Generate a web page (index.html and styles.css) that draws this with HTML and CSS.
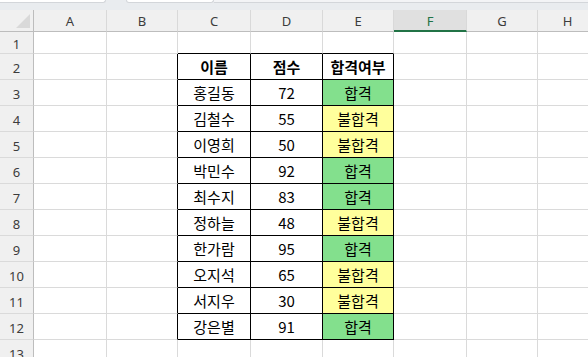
FILE: index.html
```html
<!DOCTYPE html>
<html lang="ko">
<head>
<meta charset="utf-8">
<link rel="stylesheet" href="styles.css">
</head>
<body>
<div class="topbar">
  <div class="tab tab1"></div>
  <div class="tab tab2"></div>
  <div class="tabfill"></div>
</div>
<div class="sheet">
  <div class="corner"><span class="tri"></span></div>
  <div class="ch">A</div><div class="ch">B</div><div class="ch">C</div><div class="ch">D</div><div class="ch">E</div><div class="ch sel">F</div><div class="ch">G</div><div class="ch">H</div>

  <div class="rh">1</div><div class="c"></div><div class="c"></div><div class="c tt"></div><div class="c tt"></div><div class="c tt"></div><div class="c"></div><div class="c"></div><div class="c"></div>

  <div class="rh">2</div><div class="c"></div><div class="c tl"></div><div class="c t b">이름</div><div class="c t b">점수</div><div class="c t b">합격여부</div><div class="c"></div><div class="c"></div><div class="c"></div>

  <div class="rh">3</div><div class="c"></div><div class="c tl"></div><div class="c t">홍길동</div><div class="c t">72</div><div class="c t pass">합격</div><div class="c"></div><div class="c"></div><div class="c"></div>

  <div class="rh">4</div><div class="c"></div><div class="c tl"></div><div class="c t">김철수</div><div class="c t">55</div><div class="c t fail">불합격</div><div class="c"></div><div class="c"></div><div class="c"></div>

  <div class="rh">5</div><div class="c"></div><div class="c tl"></div><div class="c t">이영희</div><div class="c t">50</div><div class="c t fail">불합격</div><div class="c"></div><div class="c"></div><div class="c"></div>

  <div class="rh">6</div><div class="c"></div><div class="c tl"></div><div class="c t">박민수</div><div class="c t">92</div><div class="c t pass">합격</div><div class="c"></div><div class="c"></div><div class="c"></div>

  <div class="rh">7</div><div class="c"></div><div class="c tl"></div><div class="c t">최수지</div><div class="c t">83</div><div class="c t pass">합격</div><div class="c"></div><div class="c"></div><div class="c"></div>

  <div class="rh">8</div><div class="c"></div><div class="c tl"></div><div class="c t">정하늘</div><div class="c t">48</div><div class="c t fail">불합격</div><div class="c"></div><div class="c"></div><div class="c"></div>

  <div class="rh">9</div><div class="c"></div><div class="c tl"></div><div class="c t">한가람</div><div class="c t">95</div><div class="c t pass">합격</div><div class="c"></div><div class="c"></div><div class="c"></div>

  <div class="rh">10</div><div class="c"></div><div class="c tl"></div><div class="c t">오지석</div><div class="c t">65</div><div class="c t fail">불합격</div><div class="c"></div><div class="c"></div><div class="c"></div>

  <div class="rh">11</div><div class="c"></div><div class="c tl"></div><div class="c t">서지우</div><div class="c t">30</div><div class="c t fail">불합격</div><div class="c"></div><div class="c"></div><div class="c"></div>

  <div class="rh">12</div><div class="c"></div><div class="c tl"></div><div class="c t">강은별</div><div class="c t">91</div><div class="c t pass">합격</div><div class="c"></div><div class="c"></div><div class="c"></div>

  <div class="rh">13</div><div class="c"></div><div class="c"></div><div class="c"></div><div class="c"></div><div class="c"></div><div class="c"></div><div class="c"></div><div class="c"></div>
</div>
</body>
</html>
```

FILE: styles.css
```css
html, body {
  margin: 0;
  padding: 0;
  background: #ffffff;
  overflow: hidden;
}

body {
  width: 588px;
  height: 357px;
  font-family: "Noto Sans CJK KR", "Noto Sans", sans-serif;
}

.topbar {
  height: 10px;
  background: #e9ecef;
  display: flex;
  align-items: flex-start;
}

.tabfill {
  flex: 1;
  height: 3px;
  background: #f3f4f6;
  border-bottom: 1px solid #d3d6da;
  box-sizing: border-box;
}

.tab {
  height: 3px;
  background: #ffffff;
  border: 1px solid #d3d6da;
  border-top: none;
  border-radius: 0 0 6px 6px;
  box-sizing: border-box;
}

.tab1 {
  width: 110px;
  margin-left: -4px;
}

.tab2 {
  width: 88px;
  margin-left: 20px;
}

.sheet {
  display: grid;
  grid-template-columns: 34px 73px 71px 73px 72px 71px 73px 71px 60px;
  grid-template-rows: 22px 22px repeat(12, 26px) 20px;
  overflow: hidden;
}

.corner,
.ch,
.rh {
  background: #f0f0f0;
  color: #3c3c3c;
  font-family: "Noto Sans", "Open Sans", sans-serif;
  font-size: 13px;
  box-sizing: border-box;
  display: flex;
  align-items: center;
  justify-content: center;
}

.corner {
  border-right: 1px solid #bdbdbd;
  border-bottom: 1px solid #bdbdbd;
  position: relative;
}

.tri {
  position: absolute;
  right: 3px;
  bottom: 3px;
  width: 0;
  height: 0;
  border-left: 14px solid transparent;
  border-bottom: 14px solid #d9d9d9;
}

.ch {
  border-right: 1px solid #d9d9d9;
  border-bottom: 1px solid #bdbdbd;
  padding-top: 1px;
}

.ch.sel {
  background: #e0e0e0;
  color: #217346;
  border-bottom: 2px solid #217346;
}

.rh {
  border-right: 1px solid #bdbdbd;
  border-bottom: 1px solid #dadada;
  padding-top: 2px;
}

.c {
  box-sizing: border-box;
  border-right: 1px solid #dadada;
  border-bottom: 1px solid #dadada;
  display: flex;
  align-items: center;
  justify-content: center;
  font-size: 15px;
  color: #000000;
}

.c.tl {
  border-right-color: #000000;
}

.c.tt {
  border-bottom-color: #000000;
}

.c.t {
  border-right-color: #000000;
  border-bottom-color: #000000;
}

.c.b {
  font-weight: 700;
}

.c.pass {
  background: #83e08d;
}

.c.fail {
  background: #ffff9c;
}
```
